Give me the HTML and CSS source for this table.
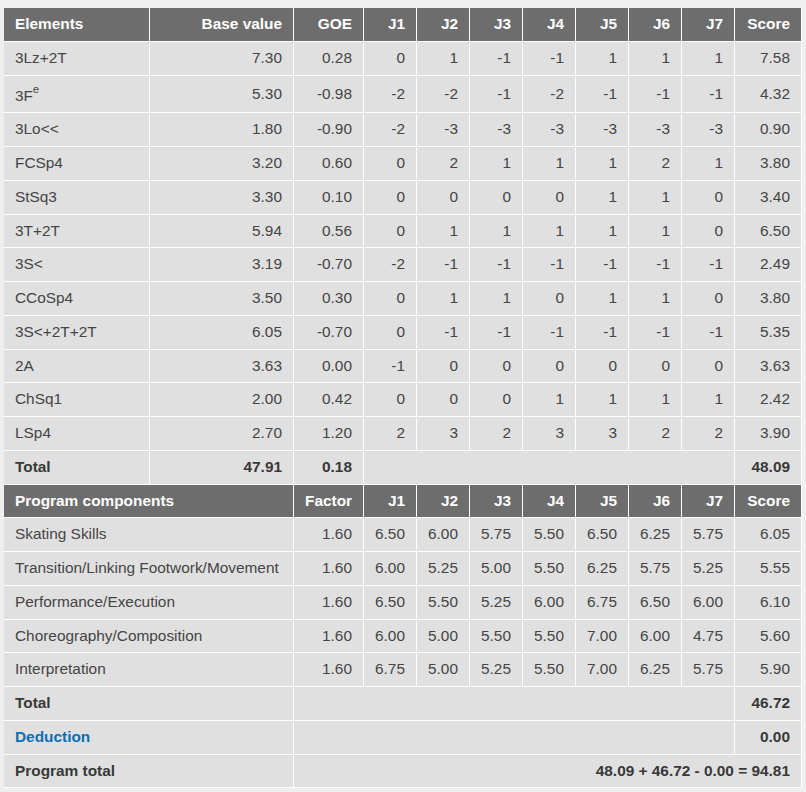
FILE: index.html
```html
<!DOCTYPE html>
<html>
<head>
<meta charset="utf-8">
<link rel="stylesheet" href="styles.css">
</head>
<body>
<table class="scores">
  <colgroup>
    <col class="c-name"><col class="c-base"><col class="c-goe">
    <col class="c-j"><col class="c-j"><col class="c-j"><col class="c-j"><col class="c-j"><col class="c-j"><col class="c-j">
    <col class="c-score">
  </colgroup>
  <tr class="head">
    <th class="l">Elements</th><th>Base value</th><th>GOE</th>
    <th>J1</th><th>J2</th><th>J3</th><th>J4</th><th>J5</th><th>J6</th><th>J7</th><th>Score</th>
  </tr>
  <tr><td class="l">3Lz+2T</td><td>7.30</td><td>0.28</td><td>0</td><td>1</td><td>-1</td><td>-1</td><td>1</td><td>1</td><td>1</td><td>7.58</td></tr>
  <tr><td class="l">3F<sup>e</sup></td><td>5.30</td><td>-0.98</td><td>-2</td><td>-2</td><td>-1</td><td>-2</td><td>-1</td><td>-1</td><td>-1</td><td>4.32</td></tr>
  <tr><td class="l">3Lo&lt;&lt;</td><td>1.80</td><td>-0.90</td><td>-2</td><td>-3</td><td>-3</td><td>-3</td><td>-3</td><td>-3</td><td>-3</td><td>0.90</td></tr>
  <tr><td class="l">FCSp4</td><td>3.20</td><td>0.60</td><td>0</td><td>2</td><td>1</td><td>1</td><td>1</td><td>2</td><td>1</td><td>3.80</td></tr>
  <tr><td class="l">StSq3</td><td>3.30</td><td>0.10</td><td>0</td><td>0</td><td>0</td><td>0</td><td>1</td><td>1</td><td>0</td><td>3.40</td></tr>
  <tr><td class="l">3T+2T</td><td>5.94</td><td>0.56</td><td>0</td><td>1</td><td>1</td><td>1</td><td>1</td><td>1</td><td>0</td><td>6.50</td></tr>
  <tr><td class="l">3S&lt;</td><td>3.19</td><td>-0.70</td><td>-2</td><td>-1</td><td>-1</td><td>-1</td><td>-1</td><td>-1</td><td>-1</td><td>2.49</td></tr>
  <tr><td class="l">CCoSp4</td><td>3.50</td><td>0.30</td><td>0</td><td>1</td><td>1</td><td>0</td><td>1</td><td>1</td><td>0</td><td>3.80</td></tr>
  <tr><td class="l">3S&lt;+2T+2T</td><td>6.05</td><td>-0.70</td><td>0</td><td>-1</td><td>-1</td><td>-1</td><td>-1</td><td>-1</td><td>-1</td><td>5.35</td></tr>
  <tr><td class="l">2A</td><td>3.63</td><td>0.00</td><td>-1</td><td>0</td><td>0</td><td>0</td><td>0</td><td>0</td><td>0</td><td>3.63</td></tr>
  <tr><td class="l">ChSq1</td><td>2.00</td><td>0.42</td><td>0</td><td>0</td><td>0</td><td>1</td><td>1</td><td>1</td><td>1</td><td>2.42</td></tr>
  <tr><td class="l">LSp4</td><td>2.70</td><td>1.20</td><td>2</td><td>3</td><td>2</td><td>3</td><td>3</td><td>2</td><td>2</td><td>3.90</td></tr>
  <tr class="total"><td class="l">Total</td><td>47.91</td><td>0.18</td><td colspan="7"></td><td>48.09</td></tr>

  <tr class="head">
    <th class="l" colspan="2">Program components</th><th>Factor</th>
    <th>J1</th><th>J2</th><th>J3</th><th>J4</th><th>J5</th><th>J6</th><th>J7</th><th>Score</th>
  </tr>
  <tr><td class="l" colspan="2">Skating Skills</td><td>1.60</td><td>6.50</td><td>6.00</td><td>5.75</td><td>5.50</td><td>6.50</td><td>6.25</td><td>5.75</td><td>6.05</td></tr>
  <tr><td class="l" colspan="2">Transition/Linking Footwork/Movement</td><td>1.60</td><td>6.00</td><td>5.25</td><td>5.00</td><td>5.50</td><td>6.25</td><td>5.75</td><td>5.25</td><td>5.55</td></tr>
  <tr><td class="l" colspan="2">Performance/Execution</td><td>1.60</td><td>6.50</td><td>5.50</td><td>5.25</td><td>6.00</td><td>6.75</td><td>6.50</td><td>6.00</td><td>6.10</td></tr>
  <tr><td class="l" colspan="2">Choreography/Composition</td><td>1.60</td><td>6.00</td><td>5.00</td><td>5.50</td><td>5.50</td><td>7.00</td><td>6.00</td><td>4.75</td><td>5.60</td></tr>
  <tr><td class="l" colspan="2">Interpretation</td><td>1.60</td><td>6.75</td><td>5.00</td><td>5.25</td><td>5.50</td><td>7.00</td><td>6.25</td><td>5.75</td><td>5.90</td></tr>
  <tr class="total"><td class="l" colspan="2">Total</td><td colspan="8"></td><td>46.72</td></tr>
  <tr class="total"><td class="l deduction" colspan="2">Deduction</td><td colspan="8"></td><td>0.00</td></tr>
  <tr class="total"><td class="l" colspan="2">Program total</td><td colspan="9">48.09 + 46.72 - 0.00 = 94.81</td></tr>
</table>
</body>
</html>
```

FILE: styles.css
```css
html, body {
  margin: 0;
  padding: 0;
  background: #efefef;
}
body {
  padding: 8px 0 0 4px;
  font-family: "Liberation Sans", Arial, sans-serif;
  font-size: 15.4px;
  color: #454545;
}
.scores {
  table-layout: fixed;
  width: 798px;
  border-collapse: separate;
  border-spacing: 0;
}
.c-name { width: 146px; }
.c-base { width: 144px; }
.c-goe { width: 70px; }
.c-j { width: 53px; }
.c-score { width: 67px; }

.scores th,
.scores td {
  box-sizing: border-box;
  padding: 8px 11px;
  line-height: 16.75px;
  text-align: right;
  white-space: nowrap;
  border-right: 1px solid #fff;
  border-bottom: 1px solid #fff;
  background: #e0e0e0;
  font-weight: normal;
}
.scores .l { text-align: left; }
.scores .head th {
  background: #6d6d6d;
  color: #fff;
  font-weight: bold;
}
.scores .total td {
  font-weight: bold;
  color: #383838;
}
.scores .total td.deduction {
  color: #0b6fb3;
}
.scores sup {
  font-size: 11px;
  line-height: 11px;
  vertical-align: 8px;
}
```
